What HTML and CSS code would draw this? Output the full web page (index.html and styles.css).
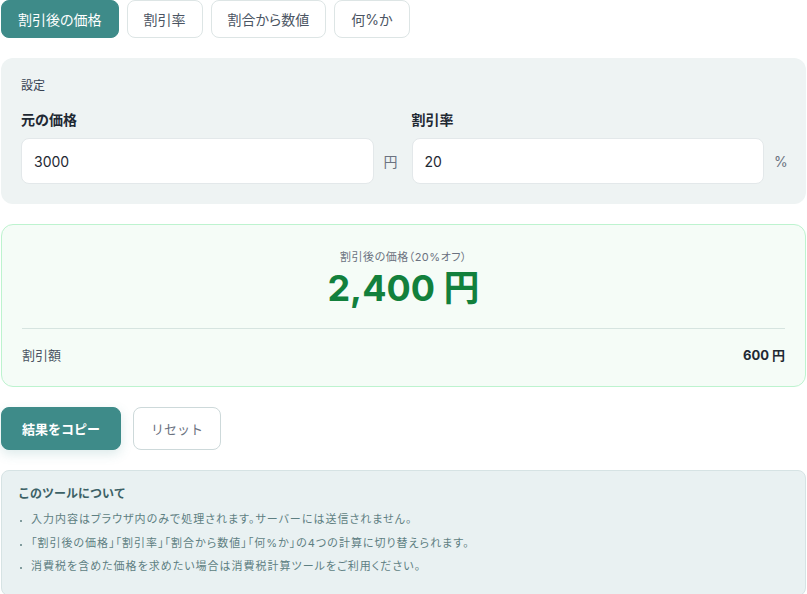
FILE: index.html
```html
<!DOCTYPE html>
<html lang="ja">
<head>
<meta charset="utf-8">
<title>割引計算</title>
<link rel="stylesheet" href="styles.css">
</head>
<body>
<div class="page">
  <div class="tabs">
    <button class="tab active">割引後の価格</button>
    <button class="tab">割引率</button>
    <button class="tab">割合から数値</button>
    <button class="tab">何%か</button>
  </div>

  <section class="settings">
    <div class="settings-title">設定</div>
    <div class="fields">
      <div class="field">
        <label class="field-label">元の価格</label>
        <div class="field-row">
          <div class="input">3000</div>
          <span class="unit">円</span>
        </div>
      </div>
      <div class="field">
        <label class="field-label">割引率</label>
        <div class="field-row">
          <div class="input">20</div>
          <span class="unit">%</span>
        </div>
      </div>
    </div>
  </section>

  <section class="result">
    <div class="result-label">割引後の価格（20%オフ）</div>
    <div class="result-value">2,400 円</div>
    <div class="divider"></div>
    <div class="result-row">
      <span class="row-label">割引額</span>
      <span class="row-value">600 円</span>
    </div>
  </section>

  <div class="actions">
    <button class="btn primary">結果をコピー</button>
    <button class="btn secondary">リセット</button>
  </div>

  <section class="info">
    <div class="info-title">このツールについて</div>
    <ul class="info-list">
      <li>入力内容はブラウザ内のみで処理されます。サーバーには送信されません。</li>
      <li>「割引後の価格」「割引率」「割合から数値」「何%か」の4つの計算に切り替えられます。</li>
      <li>消費税を含めた価格を求めたい場合は消費税計算ツールをご利用ください。</li>
    </ul>
  </section>
</div>
</body>
</html>
```

FILE: styles.css
```css
* { box-sizing: border-box; }
html, body { margin: 0; padding: 0; background: #ffffff; }
body {
  font-family: Inter, "Noto Sans CJK JP", sans-serif;
  color: #1f2933;
}
.page { padding: 0 1px; }

.tabs { display: flex; gap: 8px; }
.tab {
  font-family: inherit;
  font-size: 14px;
  line-height: 21px;
  height: 38px;
  padding: 0 16px;
  border: 1px solid #dde5e5;
  border-radius: 8px;
  background: #ffffff;
  color: #4b5563;
  font-feature-settings: "palt";
}
.tab.active {
  background: #3e8b89;
  border-color: #3e8b89;
  color: #ffffff;
}

.settings {
  margin-top: 20px;
  background: #eef3f3;
  border-radius: 12px;
  padding: 20px;
}
.settings-title {
  font-size: 12px;
  line-height: 16px;
  color: #374151;
}
.fields {
  margin-top: 15px;
  display: grid;
  grid-template-columns: 1fr 1fr;
  gap: 16px;
}
.field-label {
  display: block;
  font-size: 14px;
  font-weight: 700;
  line-height: 21px;
  color: #1f2933;
  margin-bottom: 8px;
}
.field-row { display: flex; align-items: center; gap: 10px; }
.input {
  flex: 1;
  height: 46px;
  background: #ffffff;
  border: 1px solid #e3e8ea;
  border-radius: 8px;
  padding: 0 12px;
  display: flex;
  align-items: center;
  font-size: 14px;
  color: #1f2933;
}
.unit {
  font-size: 14px;
  color: #6b7280;
  width: 12px;
}

.result {
  margin-top: 20px;
  background: #f5fcf7;
  border: 1px solid #bdf3cf;
  border-radius: 12px;
  padding: 24px 20px 21px;
  text-align: center;
}
.result-label {
  font-size: 11px;
  line-height: 16px;
  color: #6b7280;
  letter-spacing: 0.5px;
  font-feature-settings: "palt";
}
.result-value {
  font-size: 36px;
  font-weight: 700;
  line-height: 44px;
  color: #12803c;
  margin-top: 1px;
}
.divider {
  margin-top: 18px;
  height: 1px;
  background: #d6e4e0;
}
.result-row {
  margin-top: 16px;
  display: flex;
  justify-content: space-between;
  align-items: center;
  line-height: 20px;
}
.row-label { font-size: 13px; color: #4b5563; }
.row-value { font-size: 13px; font-weight: 700; color: #1f2933; }

.actions {
  margin-top: 20px;
  display: flex;
  gap: 12px;
}
.btn {
  font-family: inherit;
  font-size: 13px;
  line-height: 20px;
  border-radius: 8px;
  height: 43px;
}
.btn.primary {
  background: #3e8b89;
  border: 1px solid #3e8b89;
  color: #ffffff;
  font-weight: 700;
  padding: 0 20px;
  box-shadow: 0 4px 12px rgba(62, 139, 137, 0.18);
}
.btn.secondary {
  background: #ffffff;
  border: 1px solid #cdd9da;
  color: #6b7280;
  padding: 0 17px;
}

.info {
  margin-top: 20px;
  background: #e9f1f2;
  border: 1px solid #d6e3e4;
  border-radius: 8px;
  padding: 15px 16px 16px;
}
.info-title {
  font-size: 12px;
  font-weight: 700;
  line-height: 16px;
  color: #3c6166;
}
.info-list {
  list-style: none;
  margin: 6px 0 0;
  padding: 0;
}
.info-list li {
  font-size: 11px;
  line-height: 23.5px;
  color: #5e7f82;
  display: flex;
  align-items: center;
  font-feature-settings: "palt";
  letter-spacing: 1px;
}
.info-list li::before {
  content: "";
  flex: none;
  width: 2px;
  height: 2px;
  border-radius: 1px;
  background: #5e7f82;
  margin: 3px 9px 0 2px;
}
```
